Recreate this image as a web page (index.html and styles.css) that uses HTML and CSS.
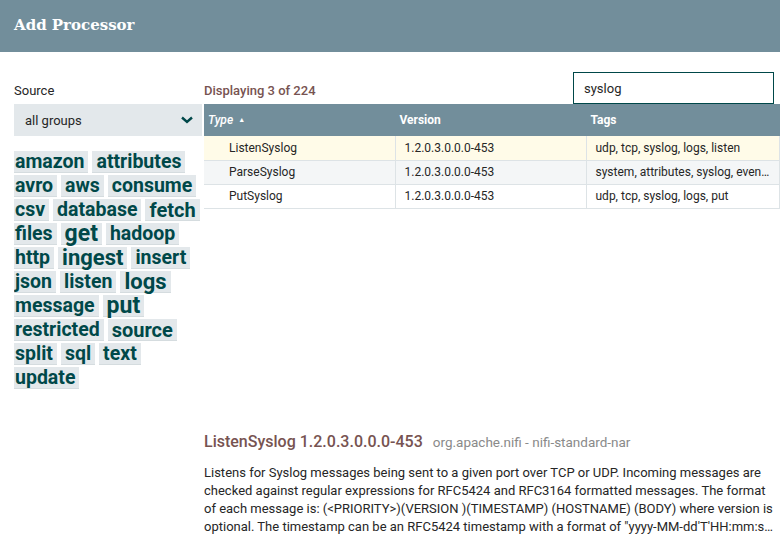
FILE: index.html
```html
<!DOCTYPE html>
<html lang="en">
<head>
    <meta charset="UTF-8">
    <title>Add Processor</title>
    <link rel="stylesheet" href="styles.css">
</head>
<body>
    <div class="dialog-header">Add Processor</div>

    <div class="dialog-content">
        <div class="filter-panel">
            <div class="source-label">Source</div>
            <div class="source-select">
                <span>all groups</span>
                <svg class="chevron" width="12" height="8" viewBox="0 0 12 8">
                    <path d="M1 1.5 L6 6 L11 1.5" fill="none" stroke="#004849" stroke-width="2.4"/>
                </svg>
            </div>

            <div class="tag-cloud">
                <ul class="tags">
                    <li class="tag">amazon</li>
                    <li class="tag">attributes</li>
                    <li class="tag">avro</li>
                    <li class="tag">aws</li>
                    <li class="tag">consume</li>
                    <li class="tag">csv</li>
                    <li class="tag">database</li>
                    <li class="tag s21">fetch</li>
                    <li class="tag">files</li>
                    <li class="tag s24">get</li>
                    <li class="tag">hadoop</li>
                    <li class="tag">http</li>
                    <li class="tag s22">ingest</li>
                    <li class="tag">insert</li>
                    <li class="tag">json</li>
                    <li class="tag">listen</li>
                    <li class="tag s22">logs</li>
                    <li class="tag">message</li>
                    <li class="tag s24">put</li>
                    <li class="tag">restricted</li>
                    <li class="tag s21">source</li>
                    <li class="tag">split</li>
                    <li class="tag">sql</li>
                    <li class="tag">text</li>
                    <li class="tag">update</li>
                </ul>
            </div>
        </div>

        <div class="types-panel">
            <div class="types-toolbar">
                <div class="displayed-count">Displaying 3 of 224</div>
                <input class="type-filter" type="text" value="syslog">
            </div>

            <table class="types-table">
                <thead>
                    <tr>
                        <th class="col-type"><i>Type</i> <span class="sort-arrow">&#9650;</span></th>
                        <th class="col-version">Version</th>
                        <th class="col-tags">Tags</th>
                    </tr>
                </thead>
                <tbody>
                    <tr class="selected">
                        <td class="col-type">ListenSyslog</td>
                        <td class="col-version">1.2.0.3.0.0.0-453</td>
                        <td class="col-tags">udp, tcp, syslog, logs, listen</td>
                    </tr>
                    <tr class="odd">
                        <td class="col-type">ParseSyslog</td>
                        <td class="col-version">1.2.0.3.0.0.0-453</td>
                        <td class="col-tags">system, attributes, syslog, event, logs</td>
                    </tr>
                    <tr>
                        <td class="col-type">PutSyslog</td>
                        <td class="col-version">1.2.0.3.0.0.0-453</td>
                        <td class="col-tags">udp, tcp, syslog, logs, put</td>
                    </tr>
                </tbody>
            </table>

            <div class="type-details">
                <div class="type-title">
                    <span class="type-name">ListenSyslog 1.2.0.3.0.0.0-453</span>
                    <span class="type-bundle">org.apache.nifi - nifi-standard-nar</span>
                </div>
                <p class="type-description">Listens for Syslog messages being sent to a given port over TCP or UDP. Incoming messages are checked against regular expressions for RFC5424 and RFC3164 formatted messages. The format of each message is: (&lt;PRIORITY&gt;)(VERSION )(TIMESTAMP) (HOSTNAME) (BODY) where version is optional. The timestamp can be an RFC5424 timestamp with a format of <span class="long-token">"yyyy-MM-dd'T'HH:mm:ss.SZ"</span></p>
            </div>
        </div>
    </div>
</body>
</html>
```

FILE: styles.css
```css
* {
    margin: 0;
    padding: 0;
    box-sizing: border-box;
}

body {
    font-family: Roboto, "Liberation Sans", sans-serif;
    font-size: 13px;
    color: #262626;
    background: white;
    width: 780px;
    overflow: hidden;
}

.dialog-header {
    height: 52px;
    background: #728e9b;
    color: white;
    font-family: "DejaVu Serif", serif;
    font-weight: bold;
    font-size: 15px;
    line-height: 50px;
    padding-left: 14px;
}

.dialog-content {
    display: flex;
    padding-left: 14px;
}

/* left column */

.filter-panel {
    width: 188px;
    flex: none;
    padding-top: 31px;
}

.source-label {
    font-size: 13px;
    line-height: 16px;
    height: 21px;
}

.source-select {
    height: 32px;
    background: #e3e8eb;
    display: flex;
    align-items: center;
    justify-content: space-between;
    padding: 0 9px 0 11px;
    font-size: 13px;
}

.chevron {
    display: block;
}

.tag-cloud {
    margin-top: 15px;
    overflow: hidden;
}

.tags {
    list-style: none;
    display: flex;
    flex-wrap: wrap;
    gap: 2px 4px;
    margin-left: -3px;
    width: 194px;
}

.tag {
    height: 22px;
    line-height: 22px;
    padding: 0 4px;
    background: #e3e8eb;
    color: #004849;
    font-size: 19.5px;
    font-weight: bold;
    border-bottom: 1px solid #d5dcdf;
    white-space: nowrap;
}

.tag.s21 { font-size: 20px; }
.tag.s22 { font-size: 22px; }
.tag.s24 { font-size: 23px; }

/* right column */

.types-panel {
    flex: 1;
    margin-left: 2px;
    min-width: 0;
}

.types-toolbar {
    display: flex;
    justify-content: space-between;
    align-items: center;
    height: 32px;
    margin-top: 20px;
    padding-right: 6px;
}

.displayed-count {
    color: #775351;
    font-weight: 500;
    font-size: 13px;
    padding-top: 5px;
}

.type-filter {
    width: 201px;
    height: 32px;
    border: 1px solid #004849;
    padding: 0 10px;
    font-family: Roboto, "Liberation Sans", sans-serif;
    font-size: 13px;
    color: #262626;
    outline: none;
}

.types-table {
    width: 100%;
    border-collapse: collapse;
    table-layout: fixed;
}

.types-table th {
    background: #728e9b;
    color: white;
    font-size: 12px;
    font-weight: bold;
    text-align: left;
    height: 32px;
    padding: 0 4px;
    border-right: 1px solid #728e9b;
}

.types-table th i {
    font-weight: 500;
}

.sort-arrow {
    font-size: 7px;
    vertical-align: 2px;
    margin-left: 2px;
}

.types-table td {
    height: 24px;
    font-size: 12px;
    padding: 0 9px;
    border-bottom: 1px solid #dde3e6;
    border-right: 1px solid #dde3e6;
    white-space: nowrap;
    overflow: hidden;
    text-overflow: ellipsis;
}

.types-table td.col-type {
    padding-left: 25px;
}

.col-type { width: 191px; }
.col-version { width: 191px; }

.types-table tr.selected td {
    background: #fffbe8;
}

.types-table tr.odd td {
    background: #f4f6f7;
}

.type-details {
    margin-top: 223px;
    padding-right: 5px;
}

.type-title {
    display: flex;
    align-items: baseline;
    gap: 10px;
}

.type-name {
    color: #775351;
    font-size: 16px;
    font-weight: 500;
}

.type-bundle {
    color: #8a8a8a;
    font-size: 13.5px;
}

.type-description {
    margin-top: 13px;
    font-size: 13px;
    line-height: 18px;
    max-height: 72px;
    display: -webkit-box;
    -webkit-line-clamp: 4;
    -webkit-box-orient: vertical;
    overflow: hidden;
}

.long-token {
    line-break: anywhere;
}
```
